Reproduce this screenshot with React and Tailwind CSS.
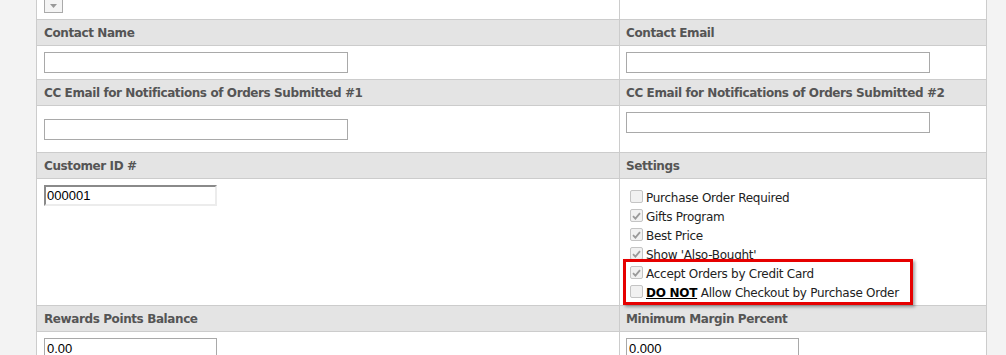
import React from 'react';

const font = { fontFamily: 'Verdana, "DejaVu Sans", sans-serif' };

const Header = ({ left, right }) => (
  <div className="grid grid-cols-[583px_1fr] h-[26px] border-b border-[#ccc] bg-[#e4e4e4] text-[12px] font-bold tracking-[-0.4px] text-[#555]">
    <div className="border-r border-[#ccc] px-[7px] pt-[1px] flex items-center">{left}</div>
    <div className="px-[6px] pt-[1px] flex items-center">{right}</div>
  </div>
);

const TextInput = ({ className = '', value = '' }) => (
  <input
    readOnly
    value={value}
    className={`block h-[21px] border border-[#a9a9a9] bg-white px-[2px] text-[13px] text-black outline-none ${className}`}
    style={{ fontFamily: '"Liberation Sans", Arial, sans-serif' }}
  />
);

const Box = ({ checked }) => (
  <span className="flex h-[13px] w-[13px] shrink-0 items-center justify-center rounded-[2px] border border-[#c4c4c4] bg-[#f1f1f1]">
    {checked && (
      <svg width="9" height="8" viewBox="0 0 9 8">
        <path d="M1 4.2 L3.4 6.6 L8 1.2" fill="none" stroke="#9a9a9a" strokeWidth="1.8" />
      </svg>
    )}
  </span>
);

const settings = [
  { label: 'Purchase Order Required', checked: false },
  { label: 'Gifts Program', checked: true },
  { label: 'Best Price', checked: true },
  { label: "Show 'Also-Bought'", checked: true },
  { label: 'Accept Orders by Credit Card', checked: true },
  {
    label: (
      <>
        <span className="font-bold underline text-black">DO NOT</span> Allow Checkout by Purchase Order
      </>
    ),
    checked: false,
  },
];

export default function App() {
  return (
    <div className="flex h-[355px] w-[1006px] overflow-hidden bg-[#f3f3f3]" style={font}>
      <div className="ml-[36px] w-[951px] shrink-0 border-x border-[#ccc] bg-white">
        <div className="grid grid-cols-[583px_1fr] h-[20px] border-b border-[#ccc]">
          <div className="border-r border-[#ccc] px-[7px]">
            <div className="flex h-[13px] w-[19px] items-center justify-center border border-t-0 border-[#aaa] bg-[#f4f4f4]">
              <svg width="7" height="4" viewBox="0 0 7 4">
                <path d="M0 0 L7 0 L3.5 4 Z" fill="#999" />
              </svg>
            </div>
          </div>
          <div />
        </div>

        <Header left="Contact Name" right="Contact Email" />
        <div className="grid grid-cols-[583px_1fr] h-[34px] border-b border-[#ccc]">
          <div className="border-r border-[#ccc] px-[7px] pt-[6px]">
            <TextInput className="w-[304px]" />
          </div>
          <div className="px-[6px] pt-[6px]">
            <TextInput className="w-[304px]" />
          </div>
        </div>

        <Header
          left="CC Email for Notifications of Orders Submitted #1"
          right="CC Email for Notifications of Orders Submitted #2"
        />
        <div className="grid grid-cols-[583px_1fr] h-[47px] border-b border-[#ccc]">
          <div className="flex items-center border-r border-[#ccc] px-[7px]">
            <TextInput className="w-[304px]" />
          </div>
          <div className="px-[6px] pt-[6px]">
            <TextInput className="w-[304px]" />
          </div>
        </div>

        <Header left="Customer ID #" right="Settings" />
        <div className="grid grid-cols-[583px_1fr] h-[127px] border-b border-[#ccc]">
          <div className="border-r border-[#ccc] px-[7px] pt-[6px]">
            <input
              readOnly
              value="000001"
              className="block h-[21px] w-[173px] border-2 border-t-[#8a8a8a] border-l-[#8a8a8a] border-b-[#ececec] border-r-[#ececec] bg-white px-[1px] text-[13px] text-black outline-none"
              style={{ fontFamily: '"Liberation Sans", Arial, sans-serif' }}
            />
          </div>
          <div className="relative pl-[10px] pt-[8px] text-[12px] tracking-[-0.27px] text-[#222]">
            {settings.map((s, i) => (
              <div key={i} className="flex h-[19px] items-center gap-[3px]">
                <Box checked={s.checked} />
                <span className="mt-[2px]">{s.label}</span>
              </div>
            ))}
            <div className="pointer-events-none absolute left-[3px] top-[80px] h-[46px] w-[290px] border-[3px] border-[#e60000] shadow-[2px_2px_3px_rgba(0,0,0,0.35)]" />
          </div>
        </div>

        <Header left="Rewards Points Balance" right="Minimum Margin Percent" />
        <div className="grid grid-cols-[583px_1fr] h-[40px]">
          <div className="border-r border-[#ccc] px-[7px] pt-[6px]">
            <TextInput className="w-[173px]" value="0.00" />
          </div>
          <div className="px-[6px] pt-[6px]">
            <TextInput className="w-[173px]" value="0.000" />
          </div>
        </div>
      </div>
    </div>
  );
}
